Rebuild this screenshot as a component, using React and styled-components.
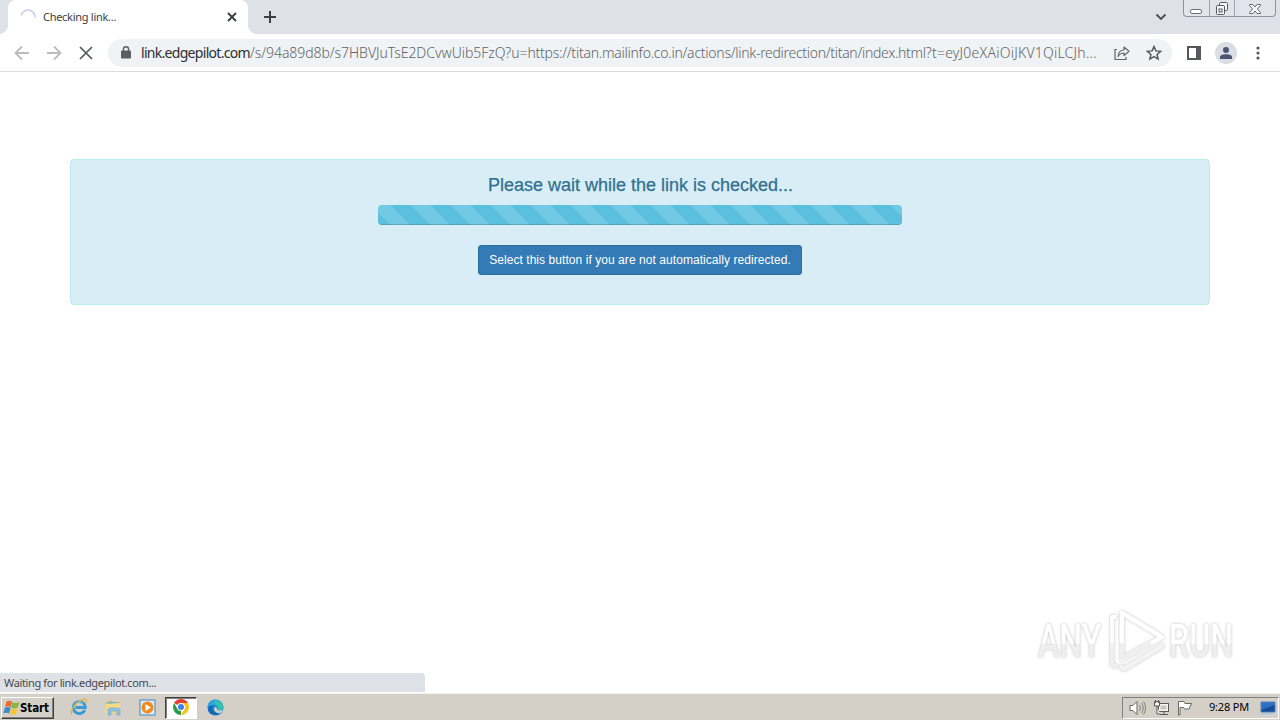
import styled, { createGlobalStyle } from "styled-components";

const GlobalStyle = createGlobalStyle`
  * {
    box-sizing: border-box;
  }
  body {
    margin: 0;
    overflow: hidden;
    background: #fff;
  }
`;

function CloseIcon({ size, width = 2, color = "#3c4043" }) {
  return (
    <svg width={size} height={size} viewBox={`0 0 ${size} ${size}`}>
      <path d={`M1 1L${size - 1} ${size - 1}M${size - 1} 1L1 ${size - 1}`} stroke={color} strokeWidth={width} />
    </svg>
  );
}

function ArrowIcon({ flip }) {
  return (
    <svg width="16" height="16" viewBox="0 0 16 16" fill="none" stroke="#babcbe" strokeWidth="1.8">
      <path d={flip ? "M1 8H14M8 1.5L14.5 8L8 14.5" : "M15 8H2M8 1.5L1.5 8L8 14.5"} />
    </svg>
  );
}

function TabStrip() {
  return (
    <Strip>
      <Tab>
        <Spinner viewBox="0 0 16 16">
          <path d="M1.2 6.5A7 7 0 0 1 15 8.5" fill="none" stroke="#ccd1f0" strokeWidth="1.8" />
        </Spinner>
        <TabTitle>Checking link...</TabTitle>
        <CloseIcon size={10} width={1.9} />
      </Tab>
      <NewTab width="12" height="12" viewBox="0 0 12 12">
        <path d="M6 0V12M0 6H12" stroke="#3c4043" strokeWidth="2" />
      </NewTab>
      <Chevron width="12" height="8" viewBox="0 0 12 8">
        <path d="M1.5 1.5L6 6L10.5 1.5" fill="none" stroke="#4b4f55" strokeWidth="1.9" />
      </Chevron>
      <WindowControls>
        <Control $width={25}>
          <svg width="13" height="15" viewBox="0 0 13 15">
            <rect x=".5" y="8.5" width="11" height="4" rx="1.5" fill="#fff" stroke="#6d737c" />
          </svg>
        </Control>
        <Control $width={25}>
          <svg width="13" height="15" viewBox="0 0 13 15" fill="#f7f8fa" stroke="#555b65">
            <rect x="3.5" y="1.5" width="8" height="8" rx="1" />
            <rect x=".5" y="4.5" width="8" height="9" rx="1" />
            <rect x="3" y="8" width="3" height="3" />
          </svg>
        </Control>
        <Control $width={41}>
          <svg width="13" height="15" viewBox="0 0 13 15">
            <path
              d="M.5 3.5H4L6 6L8 3.5H11.5V4.5L8.3 8L11.5 11.5V12.5H8L6 10L4 12.5H.5V11.5L3.7 8L.5 4.5Z"
              fill="#f7f8fa"
              stroke="#666c76"
            />
          </svg>
        </Control>
      </WindowControls>
    </Strip>
  );
}

function Toolbar() {
  return (
    <ToolbarRow>
      <NavButtons>
        <ArrowIcon />
        <ArrowIcon flip />
        <CloseIcon size={14} width={1.7} color="#55585c" />
      </NavButtons>
      <AddressBar>
        <svg width="10" height="13" viewBox="0 0 10 13">
          <rect y="4.5" width="10" height="8" rx="1" fill="#5a5e62" />
          <path d="M2.4 5V3.3a2.6 2.6 0 0 1 5.2 0V5" fill="none" stroke="#5a5e62" strokeWidth="1.4" />
        </svg>
        <Url>
          <Host>link.edgepilot.com</Host>
          <Path $spacing={-0.06}>/s/94a89d8b/s7HBVJuTsE2DCvwUib5FzQ?u=</Path>
          <Path $spacing={-0.25}>https://titan.mailinfo.co.in/actions/</Path>
          <Path $spacing={-0.3}>link-redirection/titan/index.html</Path>
          <Path $spacing={0.23}>?t=eyJ0eXAiOiJKV1QiLCJh...</Path>
        </Url>
        <svg width="16" height="16" viewBox="0 0 16 16" fill="none" stroke="#606469" strokeWidth="1.2">
          <path d="M3 4.5H1V14.5H12V12" />
          <path d="M4 11.5C4.5 7 6.5 5 10 5V2L15 6.3L10 10.5V8C7.5 8 5.5 9 4 11.5Z" strokeLinejoin="round" />
        </svg>
        <svg width="16" height="16" viewBox="0 0 16 16">
          <path
            d="M8 1.5L9.9 5.9L14.7 6.3L11.1 9.5L12.1 14.1L8 11.7L3.9 14.1L4.9 9.5L1.3 6.3L6.1 5.9Z"
            fill="none"
            stroke="#55595d"
            strokeWidth="1.5"
          />
        </svg>
      </AddressBar>
      <ToolbarActions>
        <svg width="14" height="14" viewBox="0 0 14 14">
          <path d="M1 1H13V13H1Z" fill="none" stroke="#55595d" strokeWidth="2" />
          <path d="M9 1H13V13H9Z" fill="#55595d" />
        </svg>
        <Avatar>
          <svg width="12" height="12" viewBox="0 0 12 12" fill="#4b5573">
            <circle cx="6" cy="3" r="3" />
            <path d="M0 12V10C0 8 3 7.2 6 7.2S12 8 12 10V12Z" />
          </svg>
        </Avatar>
        <MenuDots width="4" height="14" viewBox="0 0 4 14" fill="#55595d">
          <circle cx="2" cy="2" r="1.6" />
          <circle cx="2" cy="7" r="1.6" />
          <circle cx="2" cy="12" r="1.6" />
        </MenuDots>
      </ToolbarActions>
    </ToolbarRow>
  );
}

function Watermark() {
  return (
    <WatermarkBlock>
      <WordSlot $width={70}>
        <Word>ANY</Word>
      </WordSlot>
      <PlayLogo width="60" height="64" viewBox="0 0 60 64" fill="none" strokeLinejoin="round">
        <path d="M9 8H4V55L9 58" stroke="#fcfcfc" strokeWidth="4" />
        <path d="M14 4V50L54 28Z" stroke="#fff" strokeWidth="4.5" />
        <path d="M12 57L16 60L56 36" stroke="#f3f3f3" strokeWidth="4.5" />
        <path d="M4 34V55L9 58M14 34V50L43 34" stroke="#efefef" strokeWidth="4" />
      </PlayLogo>
      <WordSlot $width={66}>
        <Word>RUN</Word>
      </WordSlot>
    </WatermarkBlock>
  );
}

function StartFlag() {
  return (
    <svg width="17" height="16" viewBox="0 0 17 16">
      <path d="M3.5 1.5C5.5 .3 7.5 .5 9 1.7L7.7 7.2C6 6 4 6 2 7.2Z" fill="#ed6737" />
      <path d="M9.4 2C12 3.6 14 3.2 16.5 2L14.8 7.6C12.5 8.7 10.3 8.7 8.2 7.4Z" fill="#82b849" />
      <path d="M1.8 7.8C4 6.8 6 6.8 7.6 8L6 13.6C4.5 12.4 2.5 12.4 .3 13.6Z" fill="#3b8bd0" />
      <path d="M8 8.2C10.2 9.5 12 9.5 14.6 8.3L13 13.9C10.8 15 8.5 15 6.5 13.7Z" fill="#f4c63e" />
    </svg>
  );
}

function ExplorerIcon() {
  return (
    <svg width="18" height="18" viewBox="0 0 18 18" fill="none">
      <path d="M14.8 12A6 6 0 1 1 15.3 9.5H5.5" stroke="#379bd5" strokeWidth="2.8" />
      <path d="M4.2 8.5A5 5 0 0 1 13 5.6" stroke="#82cced" strokeWidth="1" />
      <path d="M2 16C-1 14 5 6 10 3C15 0 18 1 15.8 5" stroke="#dfb444" strokeWidth="1.4" />
    </svg>
  );
}

function FolderIcon() {
  return (
    <svg width="17" height="17" viewBox="0 0 17 17">
      <path d="M1 3L7 1L8 3H15V14H1Z" fill="#dcb75f" />
      <path d="M3 3H13V8H3Z" fill="#73b7d3" />
      <path d="M1 5L15 4V13L1 15Z" fill="#f5dc84" />
      <path d="M3 16V11Q3 9 5 9H13Q15 9 15 11V16H12V12H6V16Z" fill="#8cc4e2" stroke="#6ba3c4" strokeWidth=".6" />
    </svg>
  );
}

function MediaIcon() {
  return (
    <svg width="17" height="17" viewBox="0 0 17 17">
      <rect x="1" y="1" width="15" height="15" fill="#dfecf5" stroke="#5b95c6" strokeWidth="1.2" />
      <circle cx="8.5" cy="8.5" r="5.9" fill="#ed8b20" />
      <path d="M6.5 5L12 8.5L6.5 12Z" fill="#fff" />
    </svg>
  );
}

function ChromeIcon() {
  return (
    <svg width="16" height="16" viewBox="0 0 16 16">
      <path d="M8 8L1.1 4A8 8 0 0 1 14.9 4Z" fill="#e34133" />
      <path d="M8 8L8 16A8 8 0 0 1 1.1 4L4.5 10Z" fill="#299d4b" />
      <path d="M8 4H14.9A8 8 0 0 1 8 16L11.5 10Z" fill="#fbc116" />
      <circle cx="8" cy="8" r="4" fill="#fff" />
      <circle cx="8" cy="8" r="3" fill="#3f7fe8" />
    </svg>
  );
}

function EdgeIcon() {
  return (
    <svg width="17" height="17" viewBox="0 0 17 17">
      <circle cx="8.5" cy="8.5" r="8" fill="#1688d3" />
      <path d="M.7 7C2-1 15-1 16.5 7.5C17 11 13 12 10 10.5C12 9 10 5.5 6.5 5.5C4 5.5 1.5 6.5 .7 8Z" fill="#36bfb0" />
      <path d="M.7 7C1.5 3 5 .5 8.5 .5C6 3 8 5 9 6.3C6.5 4.8 2.5 5.5 .7 8Z" fill="#2ba6dc" />
      <path d="M6 7C4 10 6 14 12 14.5C9 17.3 3.5 16 1.5 12C.5 8 3 6 6 7Z" fill="#1468b4" />
      <path d="M9.8 10.5C12 12 15 11.5 16 10.5C15.3 13 14 14 12 14.3C8 14 5.8 10.5 8 8C9.5 8 10.5 9 9.8 10.5Z" fill="#d4d0c8" />
    </svg>
  );
}

function Taskbar() {
  return (
    <TaskbarRow>
      <StartButton>
        <StartFlag />
        Start
      </StartButton>
      <QuickLaunch>
        <TaskItem><ExplorerIcon /></TaskItem>
        <TaskItem><FolderIcon /></TaskItem>
        <TaskItem><MediaIcon /></TaskItem>
        <TaskItem $active><ChromeIcon /></TaskItem>
        <TaskItem><EdgeIcon /></TaskItem>
      </QuickLaunch>
      <Tray>
        <svg width="17" height="16" viewBox="0 0 17 16" fill="#fff" stroke="#686762">
          <path d="M1 5.5H4L8 1.5V14.5L4 10.5H1Z" />
          <path d="M10.5 5Q12.5 8 10.5 11M12.5 3Q16 8 12.5 13M14.5 1.5Q18.5 8 14.5 14.5" fill="none" stroke="#85837d" />
        </svg>
        <svg width="17" height="16" viewBox="0 0 17 16" fill="#f4f4f0" stroke="#5c5b57">
          <rect x="5.5" y="3.5" width="10" height="8" />
          <rect x="7.5" y="5.5" width="6" height="4" fill="#c9c7c0" stroke="none" />
          <path d="M7 14.5H15M11 12V14" />
          <path d="M1.5 1.5H6.5V6H1.5ZM4 6V14H7" />
          <path d="M2.5 0V3M5.5 0V3" />
        </svg>
        <svg width="17" height="16" viewBox="0 0 17 16">
          <path d="M1.5 15V1.5H7L8 3.5H14.5L12 9H7.5L6.5 7.5H3V15Z" fill="#fff" stroke="#686762" />
        </svg>
        <Clock>9:28 PM</Clock>
        <svg width="16" height="14" viewBox="0 0 16 14">
          <path d="M1 1H15V11H1Z" fill="#2b70c2" stroke="#5384b7" />
          <path d="M1.5 9L14.5 4V10.5H1.5Z" fill="#174b93" />
          <path d="M1 12H13L12 13.5H0Z" fill="#a5c9e7" />
        </svg>
      </Tray>
    </TaskbarRow>
  );
}

export default function App() {
  return (
    <Screen>
      <GlobalStyle />
      <TabStrip />
      <Toolbar />
      <Page>
        <Alert>
          <Heading>Please wait while the link is checked...</Heading>
          <ProgressBar />
          <RedirectButton>Select this button if you are not automatically redirected.</RedirectButton>
        </Alert>
        <StatusBubble>
          <StatusText>Waiting for link.edgepilot.com...</StatusText>
        </StatusBubble>
        <Watermark />
      </Page>
      <Taskbar />
    </Screen>
  );
}

const Screen = styled.div`
  display: flex;
  flex-direction: column;
  width: 1280px;
  height: 720px;
  overflow: hidden;
  font-family: "Noto Sans", sans-serif;
`;

const Strip = styled.div`
  display: flex;
  align-items: center;
  height: 34px;
  background: #dee1e8;
`;

const Tab = styled.div`
  position: relative;
  display: flex;
  align-items: center;
  width: 240px;
  height: 34px;
  margin-left: 8px;
  padding: 0 11px 0 12px;
  background: #fff;
  border-radius: 8px 8px 0 0;

  &::before,
  &::after {
    content: "";
    position: absolute;
    bottom: 0;
    width: 8px;
    height: 8px;
  }
  &::before {
    left: -8px;
    background: radial-gradient(circle at 0 0, transparent 7.5px, #fff 8px);
  }
  &::after {
    right: -8px;
    background: radial-gradient(circle at 100% 0, transparent 7.5px, #fff 8px);
  }
`;

const Spinner = styled.svg`
  width: 16px;
  height: 16px;
`;

const TabTitle = styled.div`
  flex: 1;
  margin: 0 0 2px 7px;
  color: #3c4043;
  font-size: 11px;
  letter-spacing: -0.28px;
  white-space: nowrap;
`;

const NewTab = styled.svg`
  margin-left: 16px;
`;

const Chevron = styled.svg`
  margin-left: auto;
  margin-right: 16px;
`;

const WindowControls = styled.div`
  display: flex;
  align-self: flex-start;
  height: 17px;
  margin-right: 4px;
  border: 1px solid #8e949e;
  border-top: 0;
  border-radius: 0 0 4px 4px;
  background: #e1e4ea;
`;

const Control = styled.div`
  display: flex;
  align-items: center;
  justify-content: center;
  width: ${({ $width }) => $width}px;

  & + & {
    border-left: 1px solid #9da2ab;
  }
`;

const ToolbarRow = styled.div`
  display: flex;
  align-items: center;
  height: 38px;
  background: #fff;
  border-bottom: 1px solid #dadce0;
`;

const NavButtons = styled.div`
  display: flex;
  align-items: center;
  gap: 16px;
  width: 108px;
  padding-left: 14px;

  svg:last-child {
    margin-left: 1px;
  }
`;

const AddressBar = styled.div`
  display: flex;
  align-items: center;
  gap: 16px;
  width: 1064px;
  height: 28px;
  padding: 0 10px 0 13px;
  background: #f0f3f5;
  border-radius: 14px;
`;

const Url = styled.div`
  flex: 1;
  display: flex;
  margin-left: -6px;
  font-size: 14px;
  white-space: nowrap;
`;

const Host = styled.span`
  color: #2c2e32;
  letter-spacing: -0.7px;
`;

const Path = styled.span`
  color: #5f6367;
  font-weight: 300;
  letter-spacing: ${({ $spacing }) => $spacing}px;
`;

const ToolbarActions = styled.div`
  display: flex;
  flex: 1;
  align-items: center;
  gap: 14px;
  padding-left: 15px;
`;

const MenuDots = styled.svg`
  margin-left: 5px;
`;

const Avatar = styled.div`
  display: flex;
  align-items: center;
  justify-content: center;
  width: 22px;
  height: 22px;
  border-radius: 50%;
  background: #dadde3;
`;

const Page = styled.main`
  position: relative;
  height: 621px;
  padding: 87px 70px 0;
  background: #fff;
`;

const Alert = styled.section`
  display: flex;
  flex-direction: column;
  align-items: center;
  height: 146px;
  padding-top: 15px;
  background: #d9edf7;
  border: 1px solid #bce8f1;
  border-radius: 4px;
  font-family: "Liberation Sans", Arial, sans-serif;
`;

const Heading = styled.h4`
  margin: 0 0 10px;
  padding-left: 1px;
  color: #31708f;
  font-size: 18px;
  font-weight: 500;
  line-height: 20px;
  white-space: nowrap;
  -webkit-text-stroke: 0.25px #31708f;
`;

const ProgressBar = styled.div`
  width: 524px;
  height: 20px;
  border-radius: 4px;
  background-color: #5bc0de;
  background-image: linear-gradient(
    45deg,
    rgba(255, 255, 255, 0.15) 25%,
    transparent 25%,
    transparent 50%,
    rgba(255, 255, 255, 0.15) 50%,
    rgba(255, 255, 255, 0.15) 75%,
    transparent 75%,
    transparent
  );
  background-size: 40px 40px;
  background-position: -7px 0;
  box-shadow: inset 0 -1px 0 rgba(0, 0, 0, 0.15);
`;

const RedirectButton = styled.button`
  width: 324px;
  height: 30px;
  margin-top: 20px;
  padding: 0;
  color: #fff;
  background: #337ab7;
  border: 1px solid #2e6da4;
  border-radius: 3px;
  font-family: inherit;
  font-size: 12px;
  line-height: 18px;
  letter-spacing: 0.06px;
  white-space: nowrap;
`;

const StatusBubble = styled.div`
  position: absolute;
  left: 0;
  bottom: 1px;
  display: flex;
  align-items: center;
  width: 425px;
  height: 19px;
  padding-left: 4px;
  background: #dee1e6;
  border-radius: 0 4px 0 0;
`;

const StatusText = styled.span`
  color: #45494e;
  font-size: 11px;
  letter-spacing: -0.37px;
  white-space: nowrap;
`;

const WatermarkBlock = styled.div`
  position: absolute;
  top: 537px;
  left: 1038px;
  display: flex;
  align-items: center;
`;

const PlayLogo = styled.svg`
  margin-right: 1px;
  filter: drop-shadow(0 0 1.5px rgba(0, 0, 0, 0.25));
`;

const WordSlot = styled.div`
  width: ${({ $width }) => $width}px;
  filter: drop-shadow(0 0 1.5px rgba(0, 0, 0, 0.25));
`;

const Word = styled.div`
  width: max-content;
  color: transparent;
  background: linear-gradient(#fff 55%, #efefef 55%);
  background-clip: text;
  font-family: Roboto, sans-serif;
  font-size: 46px;
  font-weight: 500;
  line-height: 60px;
  white-space: nowrap;
  transform: scaleX(0.7);
  transform-origin: left;
`;

const TaskbarRow = styled.footer`
  display: flex;
  align-items: center;
  height: 27px;
  padding: 1px 1px 0;
  background: #d4d0c8;
  border-top: 1px solid #f4f2ee;
`;

const StartButton = styled.div`
  display: flex;
  align-items: center;
  width: 53px;
  height: 22px;
  padding-left: 1px;
  border: 1px solid;
  border-color: #fff #404040 #404040 #fff;
  box-shadow: inset -1px -1px #808080;
  color: #000;
  font-family: "DejaVu Sans Condensed", "DejaVu Sans", sans-serif;
  font-size: 11.5px;
  font-weight: 700;
  letter-spacing: -0.1px;
`;

const QuickLaunch = styled.div`
  display: flex;
  gap: 2px;
  margin-left: 9px;
`;

const TaskItem = styled.div`
  display: flex;
  align-items: center;
  justify-content: center;
  width: 32px;
  height: 22px;
  padding-bottom: 1px;
  border: 1px solid transparent;

  ${({ $active }) =>
    $active &&
    `
    background: #fff;
    border-color: #404040 #fff #fff #404040;
    box-shadow: inset 1px 1px #808080;
  `}
`;

const Tray = styled.div`
  display: flex;
  align-items: center;
  gap: 7px;
  width: 157px;
  height: 22px;
  margin-left: auto;
  padding-left: 6px;
  border: 1px solid;
  border-color: #808080 #fff #fff #808080;

  svg {
    flex: none;
  }
`;

const Clock = styled.span`
  width: 41px;
  margin: 0 3px 2px 8px;
  color: #000;
  font-size: 11px;
  letter-spacing: -0.2px;
  white-space: nowrap;
`;
